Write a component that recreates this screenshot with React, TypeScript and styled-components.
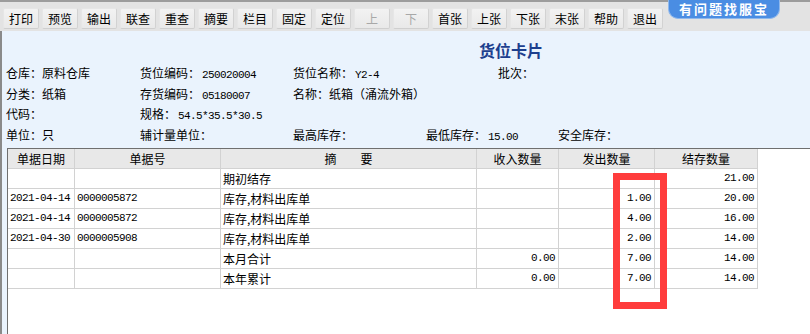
import React from 'react'
import styled, { createGlobalStyle } from 'styled-components'

const cjk = `"Noto Sans CJK SC", "Noto Sans", sans-serif`
const mono = `"Liberation Mono", "DejaVu Sans Mono", monospace`

const GlobalStyle = createGlobalStyle`
  html, body {
    margin: 0;
    padding: 0;
    overflow: hidden;
  }
  body {
    font-family: ${cjk};
    font-size: 12px;
    color: #000;
    background: #eaf3fd;
  }
`

const tools = ['打印', '预览', '输出', '联查', '重查', '摘要', '栏目', '固定', '定位', '上', '下', '首张', '上张', '下张', '末张', '帮助', '退出']
const disabledTools = ['上', '下']

const cols = [67, 146, 256, 82, 96, 103]

type Row = {
  date: string
  no: string
  memo: string
  inQty: string
  outQty: string
  stock: string
}

const rows: Row[] = [
  { date: '', no: '', memo: '期初结存', inQty: '', outQty: '', stock: '21.00' },
  { date: '2021-04-14', no: '0000005872', memo: '库存,材料出库单', inQty: '', outQty: '1.00', stock: '20.00' },
  { date: '2021-04-14', no: '0000005872', memo: '库存,材料出库单', inQty: '', outQty: '4.00', stock: '16.00' },
  { date: '2021-04-30', no: '0000005908', memo: '库存,材料出库单', inQty: '', outQty: '2.00', stock: '14.00' },
  { date: '', no: '', memo: '本月合计', inQty: '0.00', outQty: '7.00', stock: '14.00' },
  { date: '', no: '', memo: '本年累计', inQty: '0.00', outQty: '7.00', stock: '14.00' },
]

const App = () => {
  return (
    <>
      <GlobalStyle />
      <Page>
        <Toolbar>
          {tools.map((t) => (
            <ToolButton key={t} $disabled={disabledTools.includes(t)}>
              {t}
            </ToolButton>
          ))}
          <HelpPill>有问题找服宝</HelpPill>
        </Toolbar>

        <Panel>
          <Title>货位卡片</Title>

          <InfoRow>
            <Field $col={1}>仓库：原料仓库</Field>
            <Field $col={2}>货位编码：<Mono>250020004</Mono></Field>
            <Field $col={3}>货位名称：<Mono>Y2-4</Mono></Field>
            <Field $col={5}>批次：</Field>
          </InfoRow>
          <InfoRow>
            <Field $col={1}>分类：纸箱</Field>
            <Field $col={2}>存货编码：<Mono>05180007</Mono></Field>
            <Field $col={3}>名称：纸箱（涌流外箱）</Field>
          </InfoRow>
          <InfoRow>
            <Field $col={1}>代码：</Field>
            <Field $col={2}>规格：<Mono>54.5*35.5*30.5</Mono></Field>
          </InfoRow>
          <InfoRow>
            <Field $col={1}>单位：只</Field>
            <Field $col={2}>辅计量单位：</Field>
            <Field $col={3}>最高库存：</Field>
            <Field $col={4}>最低库存：<Mono>15.00</Mono></Field>
            <Field $col={6}>安全库存：</Field>
          </InfoRow>

          <GridFrame>
            <HeadRow>
              <HeadCell>单据日期</HeadCell>
              <HeadCell>单据号</HeadCell>
              <HeadCell>摘　　要</HeadCell>
              <HeadCell>收入数量</HeadCell>
              <HeadCell>发出数量</HeadCell>
              <HeadCell>结存数量</HeadCell>
            </HeadRow>
            {rows.map((r, i) => (
              <DataRow key={i}>
                <Cell $mono>{r.date}</Cell>
                <Cell $mono>{r.no}</Cell>
                <Cell>{r.memo}</Cell>
                <Cell $mono $right>{r.inQty}</Cell>
                <Cell $mono $right>{r.outQty}</Cell>
                <Cell $mono $right>{r.stock}</Cell>
              </DataRow>
            ))}
          </GridFrame>
        </Panel>

        <Highlight />
      </Page>
    </>
  )
}

export default App

const Page = styled.div`
  position: relative;
  width: 810px;
  height: 334px;
  display: flex;
  flex-direction: column;
  overflow: hidden;
`

const Toolbar = styled.div`
  position: relative;
  height: 31px;
  box-sizing: border-box;
  display: flex;
  align-items: flex-end;
  gap: 3px;
  padding: 0 0 2px 3px;
  background: #e3e3e3;
  border-top: 2px solid #9c9c9c;
`

const ToolButton = styled.div<{ $disabled?: boolean }>`
  width: 36px;
  height: 21px;
  box-sizing: border-box;
  display: flex;
  align-items: center;
  justify-content: center;
  background: linear-gradient(#f2f2f2, #e9e9e9);
  border: 1px solid #e6e6e6;
  border-right-color: #d2d2d2;
  border-bottom-color: #cfcfcf;
  border-radius: 2px;
  font-size: 12px;
  color: ${(p) => (p.$disabled ? '#a8a8a8' : '#000')};
`

const HelpPill = styled.div`
  position: absolute;
  left: 668px;
  top: -2px;
  width: 112px;
  height: 19px;
  box-sizing: border-box;
  border: 1px solid #8fb8ec;
  border-top: none;
  border-radius: 0 0 10px 10px;
  background: #4a8de3;
  color: #fff;
  font-weight: bold;
  font-size: 13px;
  line-height: 18px;
  letter-spacing: 2px;
  text-align: center;
`

const Panel = styled.div`
  flex: 1;
  display: flex;
  flex-direction: column;
  background: #eaf3fd;
  border-left: 2px solid #8a8a8a;
  min-height: 0;
`

const Title = styled.div`
  margin: 9px 0 3px;
  padding-left: 210px;
  height: 20px;
  line-height: 20px;
  text-align: center;
  font-size: 16px;
  font-weight: bold;
  color: #1d3f8e;
`

const InfoRow = styled.div`
  display: grid;
  grid-template-columns: 134px 153px 133px 72px 60px 1fr;
  padding-left: 4px;
  height: 20.5px;
  line-height: 20.5px;
`

const Field = styled.div<{ $col: number }>`
  grid-column: ${(p) => p.$col};
  grid-row: 1;
  white-space: nowrap;
  font-size: 12px;
`

const Mono = styled.span`
  font-family: ${mono};
  font-size: 11px;
  letter-spacing: -0.6px;
  margin-left: 2px;
`

const GridFrame = styled.div`
  flex: 1;
  margin: 3px 0 0 5px;
  background: #fff;
  border-top: 1px solid #6f6f6f;
  border-left: 1px solid #6f6f6f;
`

const HeadRow = styled.div`
  display: grid;
  grid-template-columns: ${cols.map((c) => `${c}px`).join(' ')};
  width: max-content;
  background: #e8e8e8;
`

const DataRow = styled.div`
  display: grid;
  grid-template-columns: ${cols.map((c) => `${c}px`).join(' ')};
  width: max-content;
`

const HeadCell = styled.div`
  height: 20px;
  box-sizing: border-box;
  border-right: 1px solid #d2d2d2;
  border-bottom: 1px solid #d2d2d2;
  line-height: 19px;
  text-align: center;
  font-size: 12px;
  white-space: pre;
`

const Cell = styled.div<{ $mono?: boolean; $right?: boolean }>`
  height: 20px;
  box-sizing: border-box;
  border-right: 1px solid #d2d2d2;
  border-bottom: 1px solid #d2d2d2;
  line-height: 19px;
  padding: ${(p) => (p.$right ? '0 3px 0 0' : '0 0 0 2px')};
  text-align: ${(p) => (p.$right ? 'right' : 'left')};
  font-family: ${(p) => (p.$mono ? mono : cjk)};
  font-size: ${(p) => (p.$mono ? '11px' : '12px')};
  letter-spacing: ${(p) => (p.$mono ? '-0.6px' : '0')};
  white-space: nowrap;
  overflow: hidden;
`

const Highlight = styled.div`
  position: absolute;
  left: 613px;
  top: 173px;
  width: 54px;
  height: 136px;
  box-sizing: border-box;
  border: 7px solid #ff3c3c;
  pointer-events: none;
`
